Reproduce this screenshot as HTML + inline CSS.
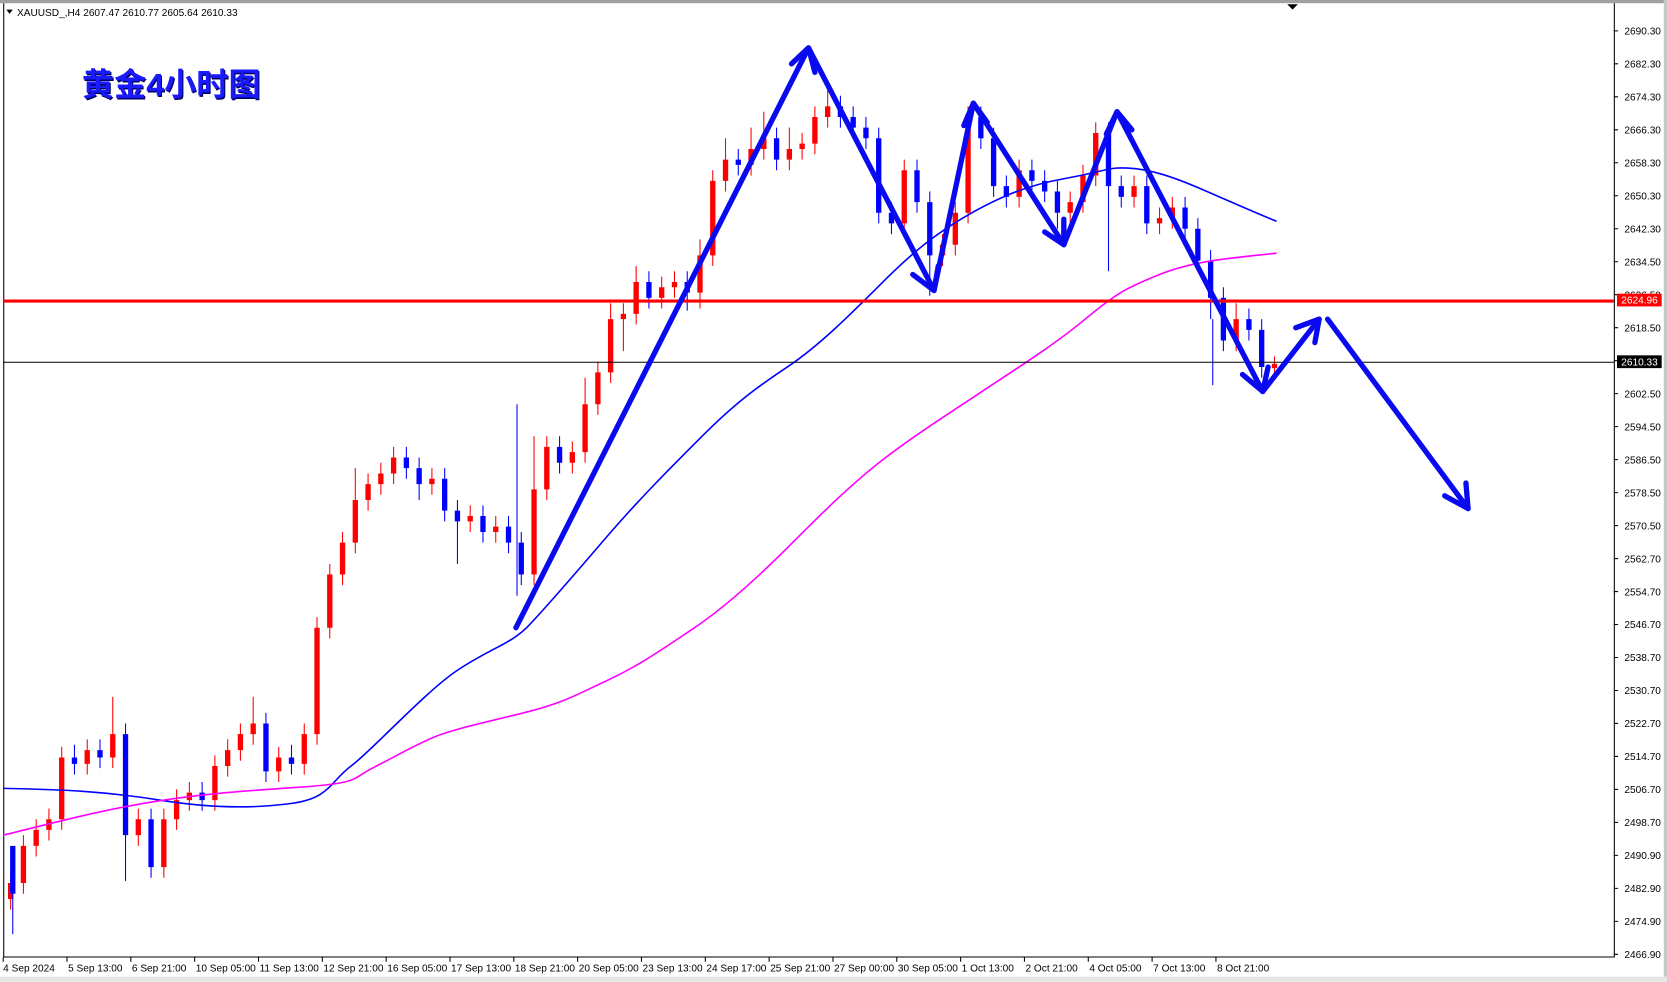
<!DOCTYPE html>
<html><head><meta charset="utf-8">
<style>
html,body{margin:0;padding:0;background:#fff;overflow:hidden}
svg{display:block}
text{font-family:"Liberation Sans","Noto Sans CJK SC",sans-serif}
</style></head>
<body>
<svg width="1667" height="982" viewBox="0 0 1567 923" preserveAspectRatio="none" xmlns="http://www.w3.org/2000/svg">
<rect x="0" y="0" width="1567" height="923" fill="#fff"/>
<rect x="0" y="0" width="1567" height="3" fill="#a0a0a0"/>
<rect x="1564" y="0" width="3" height="923" fill="#c8c8c8"/>
<rect x="0" y="918" width="1567" height="5" fill="#e6e6e6"/>
<line x1="3.5" y1="3" x2="3.5" y2="900" stroke="#000"/>
<line x1="3" y1="899.5" x2="1517" y2="899.5" stroke="#000"/>
<line x1="1517.5" y1="3" x2="1517.5" y2="900" stroke="#000"/>

<path fill="none" stroke="#ff0000" stroke-width="1" d="M10 820V855M22 785V840M34 770V805M46 760V790M58 702V780M82 695V728M106 655V722M130 760V795M154 760V825M166 742V780M178 735V762M202 710V762M214 695V730M226 680V715M238 655V700M262 702V735M286 680V728M298 580V700M310 530V600M322 500V550M334 440V520M346 445V480M358 435V465M370 420V455M406 440V465M442 475V500M466 485V510M502 410V550M514 410V470M538 415V445M550 355V435M562 340V390M574 285V360M586 285V330M598 250V305M622 260V290M634 255V280M658 225V290M670 160V250M682 130V180M706 120V165M718 105V150M742 120V160M754 125V150M766 100V145M778 85V120M850 150V220M886 220V250M898 190V240M910 100V210M958 150V195M1006 180V210M1018 155V200M1030 115V175M1066 165V195M1090 195V220M1102 185V215M1162 285V330M1198 335V352"/>
<path fill="none" stroke="#ff0000" stroke-width="5" d="M10 830V845M22 795V830M34 780V795M46 770V780M58 712V770M82 705V718M106 690V712M130 770V785M154 770V815M166 752V770M178 745V752M202 720V752M214 705V720M226 690V705M238 680V690M262 712V725M286 690V718M298 590V690M310 540V590M322 510V540M334 470V510M346 455V470M358 445V455M370 430V445M406 450V455M442 485V490M466 495V500M502 460V540M514 420V460M538 425V435M550 380V425M562 350V380M574 300V350M586 295V300M598 265V295M622 270V280M634 265V270M658 240V275M670 170V240M682 150V170M706 140V155M718 130V140M742 140V150M754 135V140M766 110V135M778 100V110M850 160V210M886 230V240M898 200V230M910 110V200M958 160V185M1006 190V200M1018 165V190M1030 125V165M1066 175V185M1090 205V210M1102 195V205M1162 300V320M1198 342V346"/>
<path fill="none" stroke="#0000ff" stroke-width="1" d="M12 840V878M70 700V728M94 695V722M118 680V828M142 760V825M190 735V762M250 670V735M274 700V728M382 420V450M394 430V470M418 440V490M430 470V530M454 475V510M478 485V520M486 380V560M490 500V550M526 410V445M610 255V290M646 255V292M694 140V165M730 120V160M790 90V120M802 100V130M814 110V140M826 120V210M838 190V220M862 150V200M874 180V278M922 100V140M934 120V185M946 165V195M970 150V180M982 160V190M994 170V215M1042 115V255M1054 165V195M1078 165V220M1114 185V225M1126 205V255M1138 235V300M1140 300V362M1150 270V330M1174 290V320M1186 300V355"/>
<path fill="none" stroke="#0000ff" stroke-width="5" d="M12 795V840M70 712V718M94 705V712M118 690V785M142 770V815M190 745V752M250 680V725M274 712V718M382 430V440M394 440V455M418 450V480M430 480V490M454 485V500M478 495V510M490 510V540M526 420V435M610 265V280M646 265V275M694 150V155M730 130V150M790 100V110M802 110V120M814 120V130M826 130V200M838 200V210M862 160V190M874 190V240M922 110V130M934 130V175M946 175V185M970 160V170M982 170V180M994 180V200M1042 125V175M1054 175V185M1078 175V210M1114 195V215M1126 215V245M1138 245V280M1150 280V320M1174 300V310M1186 310V345"/>

<path d="M3,741 C60,742 100,744 150,752 S240,760 275,755 S310,735 330,720 S400,650 430,630 S480,605 495,590 S540,540 570,505 S630,440 660,410 S710,365 740,345 S800,295 830,265 S880,220 905,205 S960,175 1000,168 S1040,157 1060,158 S1100,165 1130,178 S1180,200 1200,208" fill="none" stroke="#0000ff" stroke-width="1.5"/>
<path d="M3,785 C40,776 80,765 130,756 S220,744 280,740 S330,732 350,722 S390,700 410,692 S470,676 500,668 S540,654 570,640 S620,612 650,592 S710,545 740,515 S800,455 830,432 S890,390 920,370 S990,325 1020,300 S1060,270 1090,258 S1150,243 1200,238" fill="none" stroke="#ff00ff" stroke-width="1.5"/>

<line x1="3" y1="283" x2="1517" y2="283" stroke="#ff0000" stroke-width="3"/>
<line x1="3" y1="340.5" x2="1517" y2="340.5" stroke="#000" stroke-width="1"/>

<g font-size="9.5" fill="#000">
<path stroke="#000" d="M1517 29h4M1517 60h4M1517 91h4M1517 122h4M1517 153h4M1517 184h4M1517 215h4M1517 246h4M1517 277h4M1517 308h4M1517 339h4M1517 370h4M1517 401h4M1517 432h4M1517 463h4M1517 494h4M1517 525h4M1517 556h4M1517 587h4M1517 618h4M1517 649h4M1517 680h4M1517 711h4M1517 742h4M1517 773h4M1517 804h4M1517 835h4M1517 866h4M1517 897h4"/>
<text x="1527" y="32.5">2690.30</text>
<text x="1527" y="63.5">2682.30</text>
<text x="1527" y="94.5">2674.30</text>
<text x="1527" y="125.5">2666.30</text>
<text x="1527" y="156.5">2658.30</text>
<text x="1527" y="187.5">2650.30</text>
<text x="1527" y="218.5">2642.30</text>
<text x="1527" y="249.5">2634.50</text>
<text x="1527" y="280.5">2626.50</text>
<text x="1527" y="311.5">2618.50</text>
<text x="1527" y="373.5">2602.50</text>
<text x="1527" y="404.5">2594.50</text>
<text x="1527" y="435.5">2586.50</text>
<text x="1527" y="466.5">2578.50</text>
<text x="1527" y="497.5">2570.50</text>
<text x="1527" y="528.5">2562.70</text>
<text x="1527" y="559.5">2554.70</text>
<text x="1527" y="590.5">2546.70</text>
<text x="1527" y="621.5">2538.70</text>
<text x="1527" y="652.5">2530.70</text>
<text x="1527" y="683.5">2522.70</text>
<text x="1527" y="714.5">2514.70</text>
<text x="1527" y="745.5">2506.70</text>
<text x="1527" y="776.5">2498.70</text>
<text x="1527" y="807.5">2490.90</text>
<text x="1527" y="838.5">2482.90</text>
<text x="1527" y="869.5">2474.90</text>
<text x="1527" y="900.5">2466.90</text>
</g>
<rect x="1520" y="276" width="42" height="12" fill="#ff0000"/>
<text x="1524" y="285.5" font-size="9.5" fill="#fff">2624.96</text>
<rect x="1520" y="334" width="42" height="12" fill="#000"/>
<text x="1524" y="343.5" font-size="9.5" fill="#fff">2610.33</text>

<g font-size="9.5" fill="#000">
<path stroke="#000" d="M3 900v4M63 900v4M123 900v4M183 900v4M243 900v4M303 900v4M363 900v4M423 900v4M483 900v4M543 900v4M603 900v4M663 900v4M723 900v4M783 900v4M843 900v4M903 900v4M963 900v4M1023 900v4M1083 900v4M1143 900v4"/>
<text x="3" y="913">4 Sep 2024</text>
<text x="64" y="913">5 Sep 13:00</text>
<text x="124" y="913">6 Sep 21:00</text>
<text x="184" y="913">10 Sep 05:00</text>
<text x="244" y="913">11 Sep 13:00</text>
<text x="304" y="913">12 Sep 21:00</text>
<text x="364" y="913">16 Sep 05:00</text>
<text x="424" y="913">17 Sep 13:00</text>
<text x="484" y="913">18 Sep 21:00</text>
<text x="544" y="913">20 Sep 05:00</text>
<text x="604" y="913">23 Sep 13:00</text>
<text x="664" y="913">24 Sep 17:00</text>
<text x="724" y="913">25 Sep 21:00</text>
<text x="784" y="913">27 Sep 00:00</text>
<text x="844" y="913">30 Sep 05:00</text>
<text x="904" y="913">1 Oct 13:00</text>
<text x="964" y="913">2 Oct 21:00</text>
<text x="1024" y="913">4 Oct 05:00</text>
<text x="1084" y="913">7 Oct 13:00</text>
<text x="1144" y="913">8 Oct 21:00</text>
</g>

<path d="M6 9 L12 9 L9 13 Z" fill="#000"/>
<text x="16" y="15" font-size="9.5">XAUUSD_,H4  2607.47 2610.77 2605.64 2610.33</text>
<path d="M1210 4 L1220 4 L1215 9 Z" fill="#000"/>
<text x="78" y="91" font-size="30" font-weight="bold" fill="#000060" textLength="168" lengthAdjust="spacingAndGlyphs">黄金4小时图</text>
<text x="77" y="90" font-size="30" font-weight="bold" fill="#1a1aff" textLength="168" lengthAdjust="spacingAndGlyphs">黄金4小时图</text>

<g fill="none" stroke="#0a0af0" stroke-width="5" stroke-linecap="round" stroke-linejoin="round">
<polyline points="485,590 760,45 878,273 915,97 1000,230 1050,105 1187,368 1240,300"/>
<polyline points="744,60 760,45 766,68"/>
<polyline points="858,258 878,273 882,250"/>
<polyline points="906,118 915,97 928,115"/>
<polyline points="982,218 1000,230 1000,206"/>
<polyline points="1040,126 1050,105 1064,122"/>
<polyline points="1168,352 1187,368 1192,345"/>
<polyline points="1218,308 1240,300 1236,322"/>
<polyline points="1248,300 1380,478"/>
<polyline points="1358,466 1380,478 1378,454"/>
</g>
</svg>
</body></html>
